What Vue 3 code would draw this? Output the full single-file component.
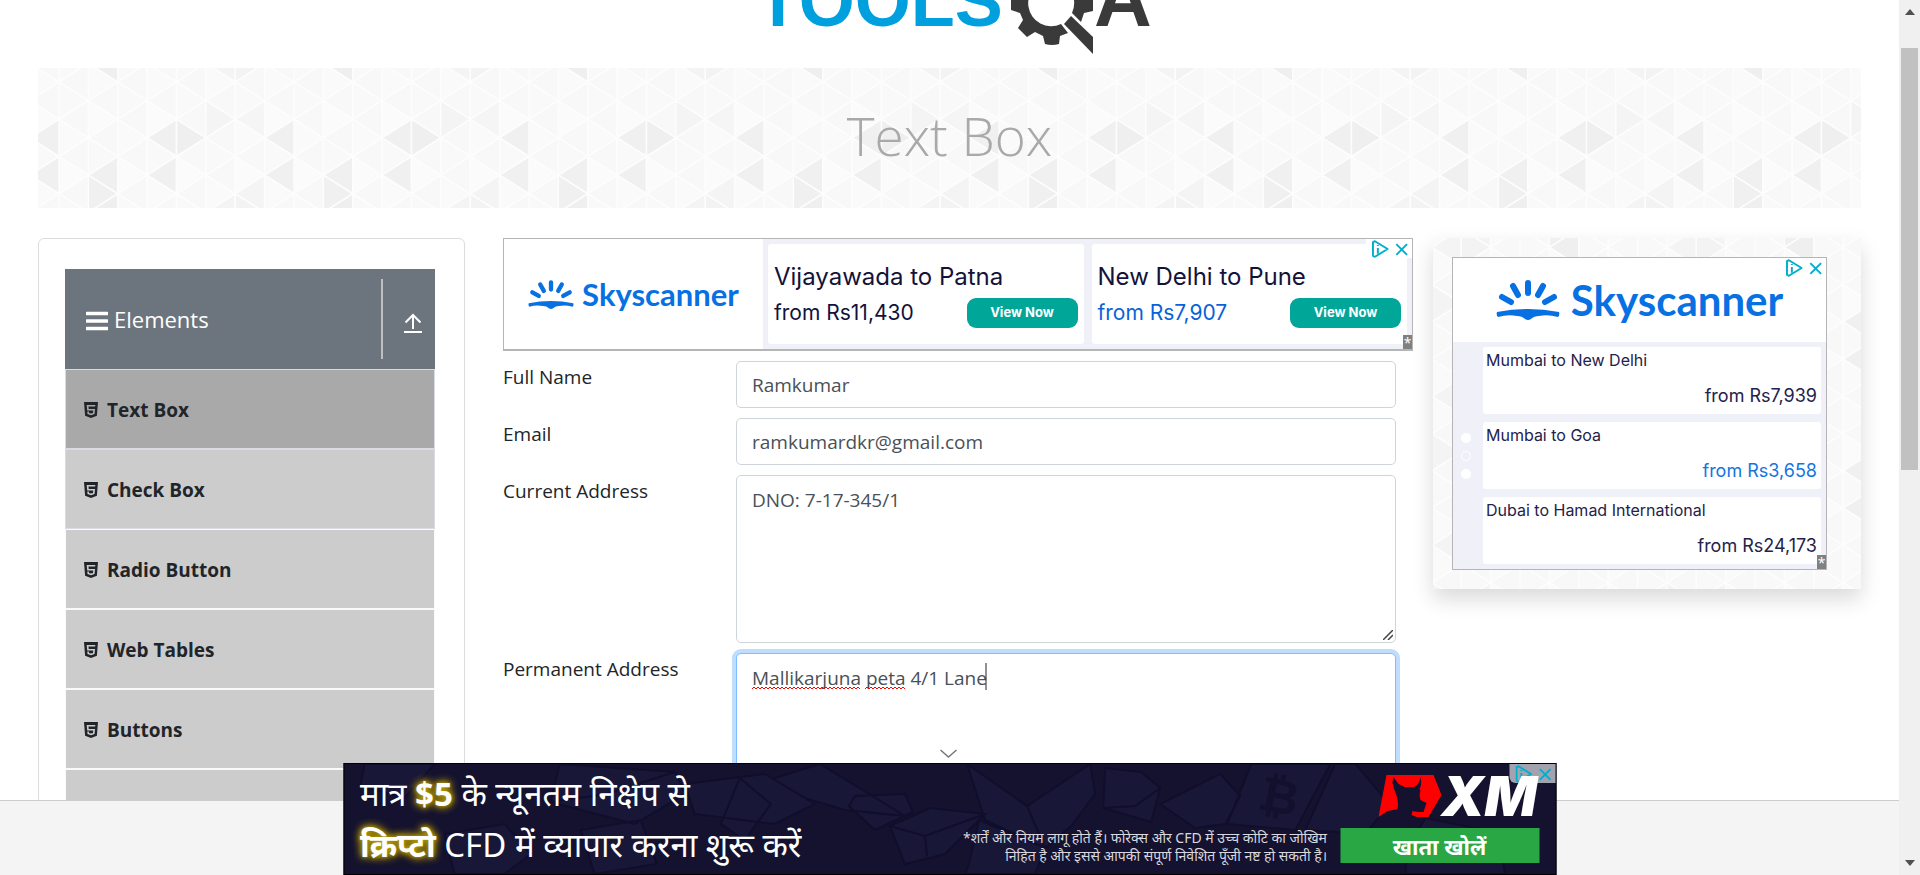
<script setup>
import { ref } from 'vue'

const fullName = ref('Ramkumar')
const email = ref('ramkumardkr@gmail.com')
const currentAddress = ref('DNO: 7-17-345/1')
const permanentAddress = ref('Mallikarjuna peta 4/1 Lane')

const menu = [
  { label: 'Text Box', active: true, edged: true },
  { label: 'Check Box', edged: true },
  { label: 'Radio Button' },
  { label: 'Web Tables' },
  { label: 'Buttons' }
]

const flights = [
  { route: 'Vijayawada to Patna', price: 'from Rs11,430' },
  { route: 'New Delhi to Pune', price: 'from Rs7,907', blue: true }
]

const offers = [
  { route: 'Mumbai to New Delhi', price: 'from Rs7,939' },
  { route: 'Mumbai to Goa', price: 'from Rs3,658', blue: true },
  { route: 'Dubai to Hamad International', price: 'from Rs24,173' }
]

// Triangle mosaic: strips of isosceles triangles, apex side decided by parity
const COL = 29.375
const HALF = 18.625
const shades = {
  '7,3': '#f0f0f0', '7,5': '#f0f0f0', '1,7': '#efefef', '1,5': '#f0f0f0', '1,6': '#f0f0f0',
  '3,3': '#f0f0f0', '4,3': '#efefef', '3,5': '#f0f0f0', '5,2': '#f4f4f4', '6,2': '#f5f5f5',
  '6,6': '#f4f4f4', '5,7': '#f4f4f4', '6,7': '#f3f3f3'
}
const triangles = []
for (let s = 0; s < 8; s++) {
  for (let r = 0; r <= 8; r++) {
    const left = (s + r) % 2 === 0
    const ax = (left ? s : s + 1) * COL
    const bx = (left ? s + 1 : s) * COL
    const y = r * HALF
    const base = left ? ['#f8f8f8', '#f9f9f9'] : ['#fafafa', '#fbfbfb', '#f9f9f9']
    triangles.push({
      points: `${ax},${y} ${bx},${y - HALF} ${bx},${y + HALF}`,
      fill: shades[`${s},${r % 8}`] || base[(s * 3 + (r % 8) * 5) % base.length]
    })
  }
}

const wave = (w) => {
  let d = 'M0 3'
  for (let x = 2, up = true; x <= w; x += 2, up = !up) d += `L${x} ${up ? 1 : 3}`
  return d
}
</script>

<template>
  <div class="window">
    <div class="page">
      <main class="content">
        <header class="brand">
          <svg class="brand-logo" viewBox="745 0 409 56" aria-label="TOOLSQA" role="img">
            <text x="756" y="26" class="brand-tools">TOOLS</text>
            <g fill="#3a3a3a">
              <path fill-rule="evenodd" d="M1019-19A40 40 0 0 1 1086-19L1084-6L1093-5V11L1084 13L1081 22L1076 17L1072 13A23 23 0 1 0 1061 24L1068 33L1060 36L1059 44Q1052 46 1045 44L1043 36L1035 32L1027 37L1018 28L1023 20L1020 13L1011 10V-4L1020-7Z" />
              <path d="M1071 16L1093 37V54L1064 24Z" />
            </g>
            <text x="1094" y="26" class="brand-a">A</text>
          </svg>
        </header>

        <section class="banner">
          <svg class="mosaic" aria-hidden="true">
            <defs>
              <pattern id="mosaic" width="235" height="149" patternUnits="userSpaceOnUse" patternTransform="translate(21 14)">
                <polygon v-for="(t, i) in triangles" :key="i" :points="t.points" :fill="t.fill" stroke="#fdfdfd" stroke-width="1.500" />
              </pattern>
              <pattern id="mosaic-side" href="#mosaic" patternTransform="translate(87 28)" />
            </defs>
            <rect width="100%" height="100%" fill="url(#mosaic)" />
          </svg>
          <h1>Text Box</h1>
        </section>

        <div class="columns">
          <aside class="menu-card">
            <div class="menu-head">
              <svg class="bars" viewBox="0 0 22 20" aria-hidden="true">
                <path d="M1 2.500H21M1 10H21M1 17.500H21" stroke="#fff" stroke-width="3.500" stroke-linecap="round" />
              </svg>
              <span class="menu-title">Elements</span>
              <button class="collapse" type="button" aria-label="Collapse">
                <svg viewBox="0 0 18 20" fill="none" stroke="#fff" stroke-width="2" aria-hidden="true">
                  <path d="M9 16V2M1.500 9.500L9 2L16.500 9.500M0 19H18" />
                </svg>
              </button>
            </div>
            <ul class="menu">
              <li v-for="m in menu" :key="m.label" :class="{ active: m.active, edged: m.edged }">
                <a href="#">
                  <svg viewBox="0 0 14 16" aria-hidden="true">
                    <path fill="#212529" fill-rule="evenodd" d="M0 0H14L12.900 13.800L7 16L1.100 13.800ZM2.700 3L3.200 8.400H9.200L9 10.900L7 11.500L5 10.900L4.900 9.600H3.300L3.500 12.100L7 13.300L10.500 12.100L11 6.900H4.700L4.500 4.600H11.200L11.300 3Z" />
                  </svg>
                  <span>{{ m.label }}</span>
                </a>
              </li>
              <li class="rest"></li>
            </ul>
          </aside>

          <section class="middle">
            <div class="ad-wide">
              <div class="sky sky-small">
                <svg viewBox="0 0 64 40" aria-hidden="true">
                  <g stroke="#0770e3" stroke-width="6" stroke-linecap="round">
                    <path d="M32 3V13M17 6L22 15M47 6L42 15M6 17L15 22M58 17L49 22" />
                  </g>
                  <path fill="#0770e3" d="M1 32Q32 26 63 32Q64 35 62 37Q52 34 43 36Q38 36 35 39Q32 41 29 39Q26 36 21 36Q12 34 2 37Q0 35 1 32Z" />
                </svg>
                <span>Skyscanner</span>
              </div>
              <div class="flights">
                <div v-for="f in flights" :key="f.route" class="flight">
                  <div class="route">{{ f.route }}</div>
                  <div class="fare">
                    <span :class="{ blue: f.blue }">{{ f.price }}</span>
                    <button type="button">View Now</button>
                  </div>
                </div>
              </div>
              <div class="choices">
                <svg viewBox="0 0 38 18" fill="none" stroke="#00aecd" stroke-width="2" aria-hidden="true">
                  <path d="M1 2V16L3 17L16 9L3 1Z" stroke-linejoin="round" />
                  <path d="M6 8V14M6 5V6M25 4L36 15M36 4L25 15" />
                </svg>
              </div>
              <span class="star">*</span>
            </div>

            <form class="form" @submit.prevent>
              <div class="field">
                <label for="name">Full Name</label>
                <input id="name" v-model="fullName" type="text">
              </div>
              <div class="field">
                <label for="email">Email</label>
                <input id="email" v-model="email" type="email">
              </div>
              <div class="field">
                <label for="current">Current Address</label>
                <div class="area">
                  <textarea id="current" v-model="currentAddress" spellcheck="false"></textarea>
                  <svg class="grip" viewBox="0 0 10 10" stroke="#444" stroke-width="1.500" aria-hidden="true">
                    <path d="M0 10L10 0M5 10L10 5" />
                  </svg>
                </div>
              </div>
              <div class="field">
                <label for="permanent">Permanent Address</label>
                <div class="area">
                  <textarea id="permanent" v-model="permanentAddress" class="focused" spellcheck="false"></textarea>
                  <svg class="marks" viewBox="0 0 236 30" fill="none" aria-hidden="true">
                    <path :d="wave(108)" stroke="#f00" transform="translate(0 23)" />
                    <path :d="wave(40)" stroke="#f00" transform="translate(113 23)" />
                    <path d="M234 0V27" stroke="#222" />
                  </svg>
                </div>
              </div>
            </form>
          </section>

          <aside class="side">
            <svg class="mosaic" aria-hidden="true">
              <rect width="100%" height="100%" fill="url(#mosaic-side)" />
            </svg>
            <div class="ad-box">
              <div class="sky sky-large">
                <svg viewBox="0 0 64 40" aria-hidden="true">
                  <g stroke="#0770e3" stroke-width="6" stroke-linecap="round">
                    <path d="M32 3V13M17 6L22 15M47 6L42 15M6 17L15 22M58 17L49 22" />
                  </g>
                  <path fill="#0770e3" d="M1 32Q32 26 63 32Q64 35 62 37Q52 34 43 36Q38 36 35 39Q32 41 29 39Q26 36 21 36Q12 34 2 37Q0 35 1 32Z" />
                </svg>
                <span>Skyscanner</span>
              </div>
              <div class="offers">
                <div class="dots"><i></i><i class="ring"></i><i></i></div>
                <div class="offer-list">
                  <div v-for="o in offers" :key="o.route" class="offer">
                    <div>{{ o.route }}</div>
                    <div class="offer-price" :class="{ blue: o.blue }">{{ o.price }}</div>
                  </div>
                </div>
              </div>
              <div class="choices">
                <svg viewBox="0 0 38 18" fill="none" stroke="#00aecd" stroke-width="2" aria-hidden="true">
                  <path d="M1 2V16L3 17L16 9L3 1Z" stroke-linejoin="round" />
                  <path d="M6 8V14M6 5V6M25 4L36 15M36 4L25 15" />
                </svg>
              </div>
              <span class="star">*</span>
            </div>
          </aside>
        </div>
      </main>

      <footer class="foot"></footer>

      <div class="bottom-ad">
        <svg class="chevron" viewBox="0 0 18 9" fill="none" stroke="#777" stroke-width="1.500" aria-hidden="true">
          <path d="M1 1L9 8L17 1" />
        </svg>
        <svg class="rocks" viewBox="0 0 1210 110" preserveAspectRatio="xMidYMid slice" aria-hidden="true">
          <g fill="#191737" stroke="#100e2b" stroke-width="2">
            <path d="M20 0L90 0L60 34L16 22ZM215 0L330 8L340 30L290 60L206 38ZM236 66L296 56L312 100L250 110ZM430 14L475 0L560 52L500 46L426 24ZM510 32L560 30L568 48L530 66L504 42Z" />
            <path d="M545 62L585 44L640 50L600 90L560 100ZM622 0L682 42L745 0L750 30L726 62L700 84L640 56ZM760 4L796 8L815 24L806 58L758 44ZM815 40L875 10L895 32L880 60L850 64ZM906 0L985 0L950 66L882 60Z" />
            <path d="M624 100L634 56L700 84L690 110H620ZM990 0L1010 0L1044 40L1020 70L960 66ZM1062 84L1080 54L1150 68L1160 110H1060ZM395 14L426 40L400 76L376 60ZM100 70L160 60L186 90L160 110H110ZM340 20L420 10L470 40L430 60L350 50Z" />
            <path d="M682 42L700 84M545 62L580 72L640 50M580 72L582 92M758 44L790 42L815 24M206 38L262 30L330 8" fill="none" />
          </g>
          <text x="915" y="48" class="coin" transform="rotate(12 930 30)">₿</text>
        </svg>
        <div class="pitch">
          <div>मात्र <b>$5</b> के न्यूनतम निक्षेप से</div>
          <div><b>क्रिप्टो</b> CFD में व्यापार करना शुरू करें</div>
        </div>
        <div class="risk">
          *शर्तें और नियम लागू होते हैं। फोरेक्स और CFD में उच्च कोटि का जोखिम<br>
          निहित है और इससे आपकी संपूर्ण निवेशित पूँजी नष्ट हो सकती है।
        </div>
        <div class="xm">
          <div class="xm-logo">
            <svg viewBox="0 0 63 42" aria-hidden="true">
              <path fill="#f00" d="M8 0H55L63 20L50 42H38L33 40L34 36L42 37L46 29L40 25L42 15L34 12H26L20 9L15 2L14 8L18 16L20 34L9 36L0 42Z" />
              <path fill="#14122f" d="M15 2L17 8L22 12L34 13Q41 10 42 2Q44 10 40 16L42 25L48 28L45 37L33 36L24 39L19 34L20 26L16 15Q13 8 15 2Z" />
            </svg>
            <span>XM</span>
          </div>
          <button type="button">खाता खोलें</button>
        </div>
        <div class="choices choices-dark">
          <svg viewBox="0 0 38 18" fill="none" stroke="#00aecd" stroke-width="2" aria-hidden="true">
            <path d="M1 2V16L3 17L16 9L3 1Z" stroke-linejoin="round" />
            <path d="M6 8V14M6 5V6M25 4L36 15M36 4L25 15" />
          </svg>
        </div>
      </div>
    </div>

    <div class="scroll" aria-hidden="true">
      <svg viewBox="0 0 10 6"><path d="M0 6L5 0L10 6Z" fill="#505050" /></svg>
      <div class="thumb"></div>
      <svg viewBox="0 0 10 6"><path d="M0 0L5 6L10 0Z" fill="#505050" /></svg>
    </div>
  </div>
</template>

<style>
body {
  margin: 0;
  background: #fff;
}
</style>

<style scoped>
.window {
  display: flex;
  height: 100vh;
  overflow: hidden;
  font-family: "Open Sans", "Noto Sans", sans-serif;
  font-size: 19px;
  line-height: 30px;
  color: #212529;
}
.window * {
  box-sizing: border-box;
}
button {
  font: inherit;
  border: 0;
  padding: 0;
  cursor: pointer;
}
.page {
  position: relative;
  flex: 1;
  min-width: 0;
  display: flex;
  flex-direction: column;
}
.content {
  flex: 1;
  min-height: 0;
  overflow: hidden;
  padding: 0 38px;
}
.foot {
  height: 75px;
  flex: none;
  background: #f4f4f4;
  border-top: 1px solid #ccc;
}
.brand {
  height: 68px;
  display: flex;
  justify-content: center;
}
.brand-logo {
  width: 409px;
  height: 56px;
}
.brand-tools,
.brand-a {
  font-family: "Liberation Sans", sans-serif;
  font-weight: 700;
  font-size: 72px;
  fill: #00a0df;
}
.brand-a {
  font-size: 80px;
  fill: #3a3a3a;
}
.banner {
  position: relative;
  height: 140px;
  display: flex;
  align-items: center;
  justify-content: center;
}
.mosaic {
  position: absolute;
  inset: 0;
  width: 100%;
  height: 100%;
}
h1 {
  position: relative;
  margin: 0;
  padding-bottom: 4px;
  font-size: 53px;
  line-height: 72px;
  font-weight: 300;
  color: #a9a9a9;
}
.columns {
  display: grid;
  grid-template-columns: minmax(0, 445fr) minmax(0, 910fr) minmax(0, 428fr);
  column-gap: 20px;
  align-items: start;
  margin-top: 30px;
}
.menu-card {
  margin-right: 18px;
  padding: 30px 29px 30px 26px;
  border: 1px solid #dcdcdc;
  border-radius: 6px;
}
.menu-head {
  display: flex;
  align-items: center;
  height: 100px;
  padding: 10px 13px 10px 21px;
  background: #6c757d;
  color: #fff;
}
.bars {
  width: 22px;
  height: 20px;
  margin: 4px 6px 0 0;
}
.menu-title {
  flex: 1;
  font-size: 22px;
}
.collapse {
  display: flex;
  align-items: center;
  align-self: stretch;
  padding: 8px 0 0 21px;
  background: none;
  border-left: 2px solid #bfbfbf;
}
.collapse svg {
  width: 18px;
  height: 20px;
}
.menu {
  margin: 0;
  padding: 0;
  list-style: none;
}
.menu li {
  border: 1px solid #fafafa;
  background: #ccc;
}
.menu li.edged {
  border-color: #d8dce2;
}
.menu li.active {
  background: #a9a9a9;
}
.menu li.rest {
  height: 80px;
}
.menu a {
  display: flex;
  align-items: center;
  height: 78px;
  padding: 2px 0 0 18px;
  gap: 9px;
  color: #212529;
  font-weight: 700;
  text-decoration: none;
}
.menu svg {
  width: 14px;
  height: 16px;
}
.ad-wide {
  position: relative;
  display: flex;
  height: 113px;
  border: 1px solid #b5b5b5;
  border-bottom-width: 2px;
}
.sky {
  display: flex;
  align-items: center;
  justify-content: center;
  font-family: Lato, sans-serif;
  font-weight: 700;
  color: #0770e3;
}
.sky-small {
  width: 259px;
  flex: none;
  gap: 8px;
  font-size: 31px;
}
.sky-small svg {
  width: 46px;
  height: 29px;
}
.flights {
  flex: 1;
  min-width: 0;
  display: flex;
  gap: 8px;
  padding: 5px;
  background: #f0f0f8;
}
.flight {
  flex: 1;
  padding: 15px 6px 0;
  border-radius: 3px;
  background: #fff;
  font-family: Inter, sans-serif;
  font-size: 21px;
  color: #14123a;
}
.route {
  font-size: 24px;
  line-height: 36px;
}
.fare {
  display: flex;
  align-items: center;
  justify-content: space-between;
  line-height: 36px;
}
.fare button {
  width: 111px;
  height: 30px;
  padding-bottom: 2px;
  border-radius: 9px;
  background: #00a698;
  color: #fff;
  font-size: 13px;
  font-weight: 700;
  line-height: 28px;
}
.blue {
  color: #0a62d8;
}
.choices {
  position: absolute;
  top: 0;
  right: 0;
  display: flex;
  padding: 1px 3px 0 6px;
  background: #fff;
}
.choices svg {
  width: 37px;
  height: 18px;
}
.choices-dark {
  background: #a3a3b0;
  border-bottom-left-radius: 6px;
}
.star {
  position: absolute;
  right: 0;
  bottom: 0;
  width: 9px;
  height: 14px;
  background: #808080;
  color: #fff;
  font-size: 14px;
  line-height: 16px;
  text-align: center;
}
.form {
  display: flex;
  flex-direction: column;
  gap: 10px;
  margin-top: 10px;
  padding-right: 17px;
}
.field {
  display: flex;
  align-items: flex-start;
}
.field label {
  width: 233px;
  flex: none;
  padding-top: 1px;
}
.area {
  position: relative;
  display: flex;
  flex: 1;
}
input,
textarea {
  flex: 1;
  min-width: 0;
  margin: 0;
  border: 1px solid #ced4da;
  border-radius: 5px;
  background: #fff;
  color: #495057;
  font: inherit;
  outline: 0;
}
input {
  height: 47px;
  padding: 1px 15px 0;
}
textarea {
  height: 168px;
  padding: 9px 15px;
  resize: none;
}
textarea.focused {
  border-color: #80bdff;
  box-shadow: 0 0 0 4px #bfdeff;
}
.grip {
  position: absolute;
  right: 3px;
  bottom: 3px;
  width: 10px;
  height: 10px;
}
.marks {
  position: absolute;
  left: 16px;
  top: 10px;
  width: 236px;
  height: 30px;
}
.side {
  position: relative;
  padding: 19px 34px 19px 19px;
  box-shadow: 0 10px 20px rgba(0, 0, 0, 0.15);
}
.ad-box {
  position: relative;
  border: 1px solid #b5b5b5;
  background: #fff;
}
.sky-large {
  height: 84px;
  gap: 11px;
  font-size: 42px;
}
.sky-large svg {
  width: 64px;
  height: 40px;
}
.offers {
  display: flex;
  padding: 5px 5px 5px 8px;
  background: #f0f0f8;
}
.dots {
  width: 22px;
  display: flex;
  flex-direction: column;
  justify-content: center;
  gap: 8px;
}
.dots i {
  width: 10px;
  height: 10px;
  border-radius: 50%;
  background: #fff;
}
.dots .ring {
  border: 1px solid #fff;
  background: none;
}
.offer-list {
  flex: 1;
  display: flex;
  flex-direction: column;
  gap: 8px;
}
.offer {
  height: 67px;
  padding: 0 4px 0 3px;
  border-radius: 3px;
  background: #fff;
  font-family: Inter, sans-serif;
  font-size: 16px;
  line-height: 26px;
  color: #24224a;
}
.offer-price {
  margin-top: 10px;
  font-size: 18px;
  text-align: right;
}
.offer-price.blue {
  color: #1474e0;
}
.bottom-ad {
  position: absolute;
  left: 50%;
  bottom: 0;
  width: 1213px;
  max-width: 100%;
  height: 112px;
  transform: translateX(-50%);
  display: flex;
  align-items: flex-start;
  padding-right: 16px;
  border: 1px solid #000;
  background: #14122f;
  color: #fff;
  font-family: "Noto Sans", "Noto Sans Devanagari", sans-serif;
}
.chevron {
  position: absolute;
  left: 595px;
  top: -15px;
  width: 18px;
  height: 9px;
}
.rocks {
  position: absolute;
  inset: 0;
  width: 100%;
  height: 100%;
}
.coin {
  font-family: "DejaVu Sans", sans-serif;
  font-size: 48px;
  font-weight: 700;
  fill: #12102d;
}
.pitch {
  position: relative;
  padding: 4px 0 0 16px;
  flex: 1;
  font-size: 33px;
  line-height: 51px;
  white-space: nowrap;
}
.pitch b {
  text-shadow: 0 0 4px #b89c00, 0 0 8px #b89c00, 0 0 10px #b89c00;
}
.risk {
  position: relative;
  margin: 65px 13px 0 0;
  font-size: 14px;
  line-height: 18px;
  color: #d8d8de;
  text-align: right;
  white-space: nowrap;
}
.xm {
  position: relative;
  width: 199px;
  flex: none;
  padding-top: 11px;
  z-index: 1;
}
.xm-logo {
  display: flex;
  justify-content: flex-end;
  height: 42px;
  padding-right: 2px;
}
.xm-logo svg {
  width: 63px;
  height: 42px;
}
.xm-logo span {
  font-family: Inter, sans-serif;
  font-size: 55px;
  font-style: italic;
  font-weight: 900;
  line-height: 42px;
}
.xm button {
  width: 100%;
  height: 35px;
  margin-top: 11px;
  background: #29a744;
  color: #fff;
  font-size: 22px;
  font-weight: 700;
}
.scroll {
  width: 21px;
  flex: none;
  display: flex;
  flex-direction: column;
  align-items: center;
  padding: 9px 0;
  background: #f0f0f0;
}
.scroll svg {
  width: 10px;
  height: 6px;
  flex: none;
}
.thumb {
  width: 17px;
  height: 422px;
  margin: 33px 0 auto;
  background: #c1c1c1;
}
</style>
